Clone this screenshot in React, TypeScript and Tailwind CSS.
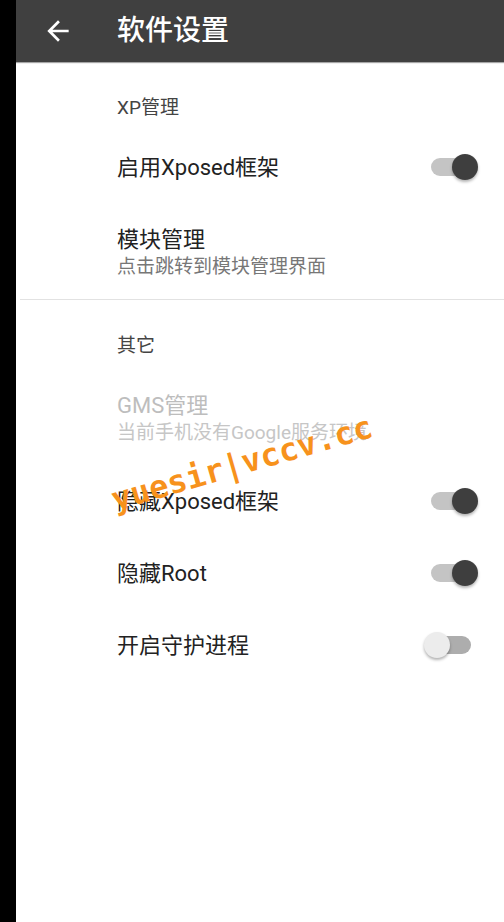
import React from "react";

const font = { fontFamily: 'Roboto, "Noto Sans CJK SC", sans-serif' };

function Toggle({ on }: { on: boolean }) {
  return (
    <div className="relative w-[54px] h-[28px] shrink-0">
      <div
        className={`absolute left-[7px] top-[5px] w-[40px] h-[18px] rounded-full ${
          on ? "bg-[#c4c4c4]" : "bg-[#adadad]"
        }`}
      />
      <div
        className={`absolute top-[1px] w-[26px] h-[26px] rounded-full shadow-[0_2px_3px_rgba(0,0,0,0.3)] ${
          on ? "left-[28px] bg-[#3e3e3e]" : "left-0 bg-[#ececec]"
        }`}
      />
    </div>
  );
}

function Category({ label }: { label: string }) {
  return (
    <div className="h-[69px] pt-[34px] pl-[101px] text-[19px] leading-[24px] text-[#444444]">
      {label}
    </div>
  );
}

function SwitchRow({ label, on }: { label: string; on: boolean }) {
  return (
    <div className="h-[72px] flex items-center justify-between pl-[101px] pr-[26px]">
      <span className="text-[22px] text-[#222222]">{label}</span>
      <Toggle on={on} />
    </div>
  );
}

function TwoLineRow({
  title,
  summary,
  disabled,
}: {
  title: string;
  summary: string;
  disabled?: boolean;
}) {
  return (
    <div className="h-[96px] pt-[23px] pl-[101px]">
      <div
        className={`text-[22px] leading-[28px] ${
          disabled ? "text-[#bdbdbd]" : "text-[#222222]"
        }`}
      >
        {title}
      </div>
      <div
        className={`text-[19px] leading-[26px] ${
          disabled ? "text-[#c6c6c6]" : "text-[#777777]"
        }`}
      >
        {summary}
      </div>
    </div>
  );
}

export default function App() {
  return (
    <div className="w-[504px] h-[922px] flex bg-black overflow-hidden" style={font}>
      <div className="w-[16px] shrink-0" />
      <div className="relative flex-1 bg-white">
        <header className="h-[62px] flex items-center bg-[#404040] shadow-[0_1px_1px_rgba(0,0,0,0.35)]">
          <svg
            viewBox="0 0 24 24"
            className="w-[32px] h-[32px] ml-[26px] fill-white"
          >
            <path d="M20 11H7.83l5.59-5.59L12 4l-8 8 8 8 1.41-1.41L7.83 13H20v-2z" />
          </svg>
          <h1 className="ml-[43px] text-[28px] text-white font-medium">软件设置</h1>
        </header>

        <Category label="XP管理" />
        <SwitchRow label="启用Xposed框架" on />
        <TwoLineRow title="模块管理" summary="点击跳转到模块管理界面" />

        <div className="ml-[4px] h-px bg-[#e2e2e2]" />

        <Category label="其它" />
        <TwoLineRow title="GMS管理" summary="当前手机没有Google服务环境" disabled />
        <SwitchRow label="隐藏Xposed框架" on />
        <SwitchRow label="隐藏Root" on />
        <SwitchRow label="开启守护进程" on={false} />

        <div
          className="absolute left-[91px] top-[447px] text-[32px] font-bold leading-none text-[#f7921c] -rotate-[16deg] whitespace-nowrap pointer-events-none"
          style={{ fontFamily: '"DejaVu Sans Mono", monospace' }}
        >
          yuesir|vccv.cc
        </div>
      </div>
    </div>
  );
}
